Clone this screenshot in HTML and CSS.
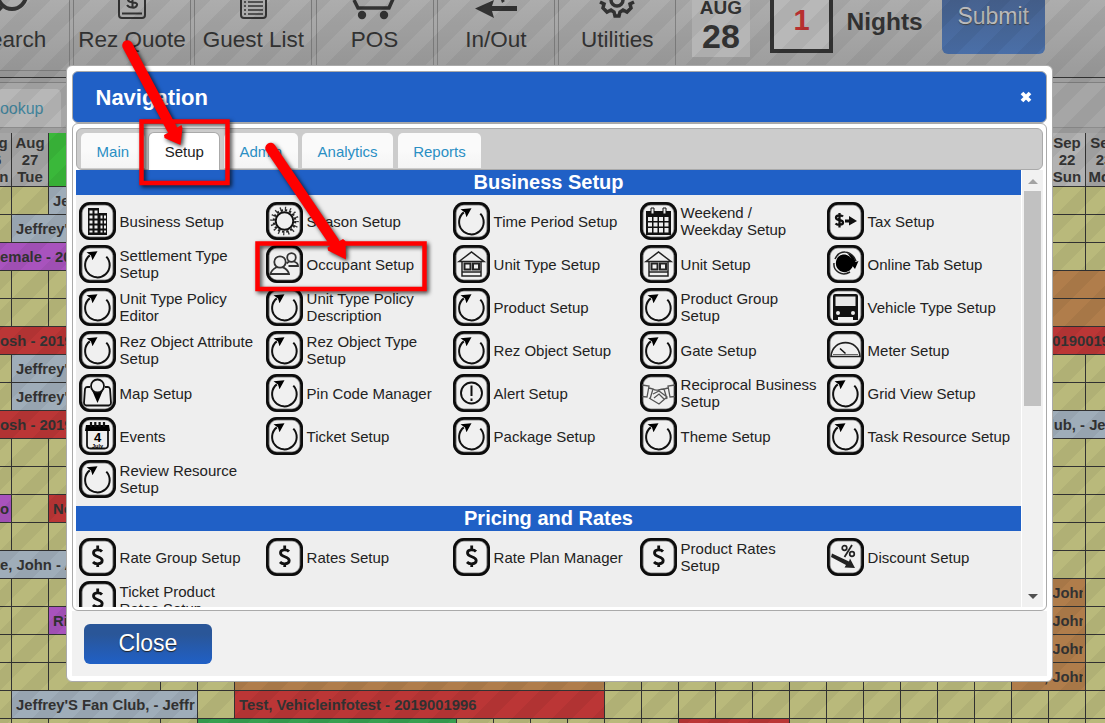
FILE: index.html
```
<!DOCTYPE html>
<html lang="en">
<head>
<meta charset="utf-8">
<title>Navigation</title>
<link rel="stylesheet" href="styles.css">
</head>
<body>

<!-- icons used by the navigation items -->
<svg class="defs" width="0" height="0">
  <symbol id="reload" viewBox="0 0 37 38"><path d="M27.3 11.600A12.300 12.300 0 1 1 10.800 10.400" fill="none" stroke="#111" stroke-width="2"/><path d="M7.500 7.200l11-1-5 9-1.500-4.700z" fill="#000"/></symbol>
  <symbol id="building" viewBox="0 0 37 38"><path d="M9 6h11v27H9zM20 11h8v22h-8z" fill="#111"/><path d="M10.500 8.500h3v3h-3zM15.500 8.500h3v3h-3zM10.500 13.500h3v3h-3zM15.500 13.500h3v3h-3zM10.500 18.500h3v3h-3zM15.500 18.500h3v3h-3zM10.500 23.500h3v3h-3zM15.500 23.500h3v3h-3zM10.500 28.500h3v2h-3zM15.500 28.500h3v2h-3zM21.500 13.500h2v3h-2zM25 13.500h2v3h-2zM21.500 18.500h2v3h-2zM25 18.500h2v3h-2zM21.500 23.500h2v3h-2zM25 23.500h2v3h-2zM21.500 28.500h2v2h-2zM25 28.500h2v2h-2z" fill="#eee"/></symbol>
  <symbol id="sun" viewBox="0 0 37 38"><circle cx="18.500" cy="19" r="8.800" fill="none" stroke="#111" stroke-width="2"/><circle cx="18.500" cy="19" r="10.800" fill="none" stroke="#222" stroke-width="2.200" stroke-dasharray="2.400 1.841"/><circle cx="18.500" cy="19" r="13" fill="none" stroke="#333" stroke-width="2.600" stroke-dasharray="1.300 3.805"/></symbol>
  <symbol id="calendar" viewBox="0 0 37 38"><path d="M6 9h25v24H6z" fill="#111"/><path d="M8 15h4v4H8zM13.500 15h4v4h-4zM19 15h4v4h-4zM24.500 15h4v4h-4zM8 20.500h4v4H8zM13.500 20.500h4v4h-4zM19 20.500h4v4h-4zM24.500 20.500h4v4h-4zM8 26h4v4.500H8zM13.500 26h4v4.500h-4zM19 26h4v4.500h-4zM24.500 26h4v4.500h-4z" fill="#eee"/><path d="M11 6h3v6h-3zM23 6h3v6h-3z" fill="#eee" stroke="#111"/></symbol>
  <symbol id="tax" viewBox="0 0 37 38"><path d="M16 14.500c-1.500-1.700-7-1.800-7 1.200 0 3.300 7 1.800 7 4.800 0 2.900-5.800 2.700-7.500 1M12.500 11v14.500" fill="none" stroke="#111" stroke-width="2.300"/><path d="M18 17.500h4v-3.500l8 5-8 4.500v-3h-4z" fill="#111"/></symbol>
  <symbol id="people" viewBox="0 0 37 38"><g fill="none" stroke="#333" stroke-width="1.800"><circle cx="14" cy="17" r="5.700"/><path d="M11 22c-3 1.500-5.500 2.500-6.500 7H23c-.8-4.500-3.500-5.500-6.500-7"/><circle cx="25.500" cy="12.500" r="4.300"/><path d="M20.500 18.500l2.500-2M28 16.500c2.500.8 4 2 4 4.500H22.500"/></g></symbol>
  <symbol id="house" viewBox="0 0 37 38"><g fill="none" stroke="#222" stroke-width="1.500"><path d="M6 16.500L18.500 7 31 16.500zM9 16.500V31h19V16.500M9 27h19"/><path d="M11.500 18.500h6v6h-6zM20 18.500h6v6h-6z" stroke-width="2"/></g></symbol>
  <symbol id="globe" viewBox="0 0 37 38"><path d="M11 12c4-4 10-3 13 1 3 3 3 8 0 11-3 4-9 4-12 1-4-3-4-9-1-13z" fill="#000"/><path d="M8 14C12 5 24 4 29 16M7 18c-1 8 8 14 16 9" fill="none" stroke="#222" stroke-width="1.500"/><path d="M20 8c5 1 8 5 8.500 9l3-1-3.500 8-5-6h2.500c-.5-4-2.500-7-5.500-10z" fill="#000"/></symbol>
  <symbol id="bus" viewBox="0 0 37 38"><path d="M8 6h21q2 0 2 2v24h-5v-3H11v3H6V8q0-2 2-2z" fill="#111"/><path d="M8.500 8.500h20v9.500h-20z" fill="#e8e8e8"/><circle cx="11" cy="25" r="2" fill="#eee"/><circle cx="26" cy="25" r="2" fill="#eee"/></symbol>
  <symbol id="meter" viewBox="0 0 37 38"><path d="M4 25.500C5 7 32 7 33 25.500z" fill="none" stroke="#222" stroke-width="1.600"/><path d="M6 23.500h25" stroke="#666"/><path d="M13 17.500l5.500 5" stroke="#111" stroke-width="1.500"/></symbol>
  <symbol id="map" viewBox="0 0 37 38"><path d="M11 13H8q-1.500 0-2 2L5 29q0 2 2 2.500h23q2-.5 2-2.500l-1-14q-.5-2-2-2h-3" fill="none" stroke="#111" stroke-width="1.800"/><path d="M12 14l6.500 15L25 14z" fill="#000"/><circle cx="18.500" cy="12" r="6.500" fill="#eee" stroke="#111" stroke-width="1.800"/></symbol>
  <symbol id="alert" viewBox="0 0 37 38"><circle cx="18.500" cy="19" r="10.500" fill="none" stroke="#111" stroke-width="1.900"/><path d="M18.500 11.500v10.500M18.500 24.500v2.500" stroke="#111" stroke-width="2"/></symbol>
  <symbol id="hands" viewBox="0 0 37 38"><g fill="none" stroke="#555" stroke-width="1.300"><path d="M2 11l7 1-2 11-5-.5M35 11l-7 1 2 11 5-.5M9 14l4 1-3 10M28 14l-4 1 3 10M13 15c4 3 5 0 11 0M13 20l6-3 8 6-8 7-10-6M14 24l5-4 5 5"/></g></symbol>
  <symbol id="events" viewBox="0 0 37 38"><path d="M8 13v15q0 3.500 3.500 3.500h14q3.500 0 3.500-3.500V13" fill="#eee" stroke="#111" stroke-width="1.800"/><path d="M7 8h23l1 6H6z" fill="#000"/><path d="M12 5v5M16.300 5v5M20.600 5v5M25 5v5" stroke="#111" stroke-width="2.200"/><text x="18.500" y="25" font-size="13" font-weight="bold" text-anchor="middle">4</text><text x="18.500" y="30.500" font-size="5.500" font-weight="bold" text-anchor="middle">July</text></symbol>
  <symbol id="dollar" viewBox="0 0 37 38"><path d="M23 13.500c-1.800-2-8.500-2.600-8.500 1.500 0 4.500 8.700 3 8.700 7.500 0 4.200-7 4-9.200 1.500M18.700 7.500v4M18.700 25v4" fill="none" stroke="#111" stroke-width="2.800"/></symbol>
  <symbol id="discount" viewBox="0 0 37 38"><path d="M5 15.500l17 8 1-3 5 9.500-10.500-.500 1.500-2.500L4 19z" fill="#222"/><g fill="none" stroke="#222" stroke-width="1.700"><circle cx="17.500" cy="10" r="2.300"/><circle cx="25" cy="16" r="2.300"/><path d="M25 7l-7.500 12"/></g></symbol>
</svg>

<div class="toolbar">
  <div class="tool first"><svg width="60" height="22" viewBox="0 0 60 22"><g fill="none" stroke="#333"><circle cx="31" cy="-5" r="14" stroke-width="4"/><path d="M20 6l-9 9" stroke-width="6"/></g></svg><span>Search</span></div>
  <div class="tool"><svg width="60" height="22" viewBox="0 0 60 22"><g fill="none" stroke="#333" stroke-width="2"><rect x="17" y="-14" width="26" height="32" rx="3"/><path d="M20 13.500h20"/><path d="M36-1c-4-4-11-3-10 1s10 1 9 5-8 3-10 0M30.500-4v12"/></g></svg><span>Rez Quote</span></div>
  <div class="tool"><svg width="60" height="22" viewBox="0 0 60 22"><g fill="none" stroke="#333" stroke-width="2"><rect x="18" y="-14" width="25" height="32" rx="3"/><path d="M21 2h2M25 2h15M21 6h2M25 6h15M21 10h2M25 10h15M21 14h2M25 14h15" stroke-width="1.300"/></g></svg><span>Guest List</span></div>
  <div class="tool"><svg width="60" height="22" viewBox="0 0 60 22"><path d="M9 0l4 8h31l4-9" fill="none" stroke="#333" stroke-width="3.500"/><circle cx="17" cy="15" r="4.200" fill="#333"/><circle cx="39" cy="15" r="4.200" fill="#333"/></svg><span>POS</span></div>
  <div class="tool"><svg width="60" height="22" viewBox="0 0 60 22"><path d="M9 8.500L28 0l-2 6h25v5H26l2 7z" fill="#333"/><path d="M34-3l5 4-3 2z" fill="#333"/></svg><span>In/Out</span></div>
  <div class="tool"><svg width="60" height="22" viewBox="0 0 60 22"><g fill="none" stroke="#333" stroke-width="3.500"><circle cx="30" cy="0" r="6"/><path d="M13 2l4 2-1 4 4 4 4-2 3 2 1 4h4l1-4 3-2 4 2 4-4-1-4 4-2"/></g></svg><span>Utilities</span></div>
  <div class="date"><span class="month">AUG</span><span class="day">28</span></div>
  <div class="count">1</div>
  <div class="nights">Nights</div>
  <div class="submit">Submit</div>
</div>

<div class="lookupbar"><div class="lookup">Lookup</div></div>

<div class="gridhead">
  <div class="past">Aug<br>26<br>Mon</div><div>Aug<br>27<br>Tue</div><div class="today"></div><div class="skip"></div>
  <div class="weekend">Sep<br>22<br>Sun</div><div>Sep<br>23<br>Mon</div>
</div>

<div class="calendar">
  <div class="row"><div class="ev blue" style="grid-column:3/6">Jeffrey'S</div></div>
  <div class="row"><div class="ev blue" style="grid-column:2/6">Jeffrey'S Fan</div></div>
  <div class="row"><div class="ev purple cut" style="grid-column:1/5">emale - 2019001996</div></div>
  <div class="row"><div class="ev orange" style="grid-column:27/31"></div></div>
  <div class="row"><div class="ev orange" style="grid-column:27/31"></div></div>
  <div class="row"><div class="ev red cut" style="grid-column:1/5">osh - 2019001996</div><div class="ev red tail" style="grid-column:20/31">2019001996</div></div>
  <div class="row"><div class="ev blue" style="grid-column:2/6">Jeffrey'S Fan</div></div>
  <div class="row"><div class="ev blue" style="grid-column:2/6">Jeffrey'S Fan</div></div>
  <div class="row"><div class="ev red cut" style="grid-column:1/5">osh - 2019001996</div><div class="ev blue club" style="grid-column:20/31">Club, - Jeffrey</div></div>
  <div class="row"></div>
  <div class="row"></div>
  <div class="row"><div class="ev purple cut" style="grid-column:1/2">o</div><div class="ev red" style="grid-column:3/6">No Name</div></div>
  <div class="row"></div>
  <div class="row"><div class="ev blue cut" style="grid-column:1/6">e, John - A</div></div>
  <div class="row"><div class="ev orange" style="grid-column:27/29">Doe, John</div></div>
  <div class="row"><div class="ev purple" style="grid-column:3/5">Rick</div><div class="ev orange" style="grid-column:27/29">Doe, John</div></div>
  <div class="row"><div class="ev orange" style="grid-column:27/29">Doe, John</div></div>
  <div class="row"><div class="ev orange" style="grid-column:6/16"></div><div class="ev orange" style="grid-column:27/29">Doe, John</div></div>
  <div class="row"><div class="ev blue" style="grid-column:2/5">Jeffrey'S Fan Club, - Jeffrey</div><div class="ev red" style="grid-column:6/16">Test, Vehicleinfotest - 2019001996</div></div>
  <div class="row"><div class="ev green" style="grid-column:5/12"></div><div class="ev red" style="grid-column:18/21"></div></div>
</div>

<div class="overlay"></div>

<div class="dialog">
  <div class="titlebar"><span>Navigation</span><svg width="12" height="12" viewBox="0 0 12 12"><path d="M2 2l8 8M10 2l-8 8" stroke="#fff" stroke-width="3.800"/></svg></div>
  <div class="content">
    <div class="tabs"><a>Main</a><a class="active">Setup</a><a>Admin</a><a>Analytics</a><a>Reports</a></div>
    <div class="panel">
      <div class="scroll">
        <h2>Business Setup</h2>
        <div class="items">
          <div class="item"><svg><use href="#building"/></svg><span>Business Setup</span></div>
          <div class="item"><svg><use href="#sun"/></svg><span>Season Setup</span></div>
          <div class="item"><svg><use href="#reload"/></svg><span>Time Period Setup</span></div>
          <div class="item"><svg><use href="#calendar"/></svg><span>Weekend /<br>Weekday Setup</span></div>
          <div class="item"><svg><use href="#tax"/></svg><span>Tax Setup</span></div>
          <div class="item"><svg><use href="#reload"/></svg><span>Settlement Type<br>Setup</span></div>
          <div class="item"><svg><use href="#people"/></svg><span>Occupant Setup</span></div>
          <div class="item"><svg><use href="#house"/></svg><span>Unit Type Setup</span></div>
          <div class="item"><svg><use href="#house"/></svg><span>Unit Setup</span></div>
          <div class="item"><svg><use href="#globe"/></svg><span>Online Tab Setup</span></div>
          <div class="item"><svg><use href="#reload"/></svg><span>Unit Type Policy<br>Editor</span></div>
          <div class="item"><svg><use href="#reload"/></svg><span>Unit Type Policy<br>Description</span></div>
          <div class="item"><svg><use href="#reload"/></svg><span>Product Setup</span></div>
          <div class="item"><svg><use href="#reload"/></svg><span>Product Group<br>Setup</span></div>
          <div class="item"><svg><use href="#bus"/></svg><span>Vehicle Type Setup</span></div>
          <div class="item"><svg><use href="#reload"/></svg><span>Rez Object Attribute<br>Setup</span></div>
          <div class="item"><svg><use href="#reload"/></svg><span>Rez Object Type<br>Setup</span></div>
          <div class="item"><svg><use href="#reload"/></svg><span>Rez Object Setup</span></div>
          <div class="item"><svg><use href="#reload"/></svg><span>Gate Setup</span></div>
          <div class="item"><svg><use href="#meter"/></svg><span>Meter Setup</span></div>
          <div class="item"><svg><use href="#map"/></svg><span>Map Setup</span></div>
          <div class="item"><svg><use href="#reload"/></svg><span>Pin Code Manager</span></div>
          <div class="item"><svg><use href="#alert"/></svg><span>Alert Setup</span></div>
          <div class="item"><svg><use href="#hands"/></svg><span>Reciprocal Business<br>Setup</span></div>
          <div class="item"><svg><use href="#reload"/></svg><span>Grid View Setup</span></div>
          <div class="item"><svg><use href="#events"/></svg><span>Events</span></div>
          <div class="item"><svg><use href="#reload"/></svg><span>Ticket Setup</span></div>
          <div class="item"><svg><use href="#reload"/></svg><span>Package Setup</span></div>
          <div class="item"><svg><use href="#reload"/></svg><span>Theme Setup</span></div>
          <div class="item"><svg><use href="#reload"/></svg><span>Task Resource Setup</span></div>
          <div class="item"><svg><use href="#reload"/></svg><span>Review Resource<br>Setup</span></div>
        </div>
        <h2>Pricing and Rates</h2>
        <div class="items">
          <div class="item"><svg><use href="#dollar"/></svg><span>Rate Group Setup</span></div>
          <div class="item"><svg><use href="#dollar"/></svg><span>Rates Setup</span></div>
          <div class="item"><svg><use href="#dollar"/></svg><span>Rate Plan Manager</span></div>
          <div class="item"><svg><use href="#dollar"/></svg><span>Product Rates<br>Setup</span></div>
          <div class="item"><svg><use href="#discount"/></svg><span>Discount Setup</span></div>
          <div class="item"><svg><use href="#dollar"/></svg><span>Ticket Product<br>Rates Setup</span></div>
        </div>
      </div>
      <div class="scrollbar"><i class="up"></i><i class="thumb"></i><i class="down"></i></div>
    </div>
  </div>
  <div class="buttons"><div class="close">Close</div></div>
</div>

<!-- red boxes and arrows -->
<svg class="marks" width="1105" height="723" viewBox="0 0 1105 723">
  <g fill="none" stroke="#f00" stroke-width="4.500">
    <rect x="141.500" y="121.500" width="86" height="61.500"/>
    <rect x="257.500" y="243.500" width="167" height="45.500"/>
  </g>
  <g stroke="#f00" stroke-width="10.500" stroke-linecap="round"><path d="M127.500 45.500L172 129M270.500 148L334 242"/></g>
  <path d="M180.500 145L164.500 138 164 135 181.500 125 182.500 128zM346 259.500L328 250.500 327.500 247.500 343 239 345.500 241z" fill="#f00"/>
</svg>

</body>
</html>
```
FILE: styles.css
```
*
{
box-sizing:border-box;
}

body
{
margin:0;
width:1105px;
height:723px;
overflow:hidden;
position:relative;
background:#a6a6a6;
font-family:"Liberation Sans", Arial, sans-serif;
font-size:15px;
line-height:17px;
color:#222;
}

.defs
{
position:absolute;
}

/* top toolbar */
.toolbar
{
display:flex;
height:78px;
border-bottom:1px solid #333;
background:linear-gradient(#adadad,#9b9b9b);
color:#333;
}

.tool
{
width:118px;
height:71px;
margin-right:3.3px;
flex:none;
display:flex;
flex-direction:column;
align-items:center;
border:solid #808080;
border-width:0 1px 1px 1px;
font-size:22.5px;
line-height:26px;
white-space:nowrap;
}

.tool svg
{
display:block;
margin-bottom:5px;
}

.tool.first
{
margin-left:-48.3px;
}

.date
{
width:58px;
height:57px;
margin-left:12.5px;
overflow:hidden;
background:#b6b6b6;
font-weight:bold;
text-align:center;
display:flex;
flex-direction:column;
flex:none;
}

.month
{
font-size:19px;
line-height:15px;
}

.day
{
font-size:34px;
line-height:43px;
}

.count
{
width:63px;
height:53px;
margin-left:20px;
flex:none;
border:4px solid #333;
border-top:0;
background:#b8b8b8;
color:#b83030;
font-size:29px;
font-weight:bold;
line-height:41px;
text-align:center;
}

.nights
{
margin-left:13.5px;
font-size:24.5px;
font-weight:bold;
line-height:43px;
}

.submit
{
width:103px;
height:54px;
margin-left:19px;
flex:none;
border-radius:0 0 6px 6px;
background:linear-gradient(#47628f,#4a6fa8);
color:#bbb;
font-size:23px;
line-height:32px;
text-align:center;
text-shadow:0 1px 1px #444;
}

.lookupbar
{
height:55px;
padding-top:11px;
background:linear-gradient(#9f9f9f 4px,#808080 4px,#808080 5px,#a6a6a6 5px,#a6a6a6 49px,#8c8c8c 49px,#8c8c8c 50px,#9f9f9f 50px);
}

.lookup
{
width:61px;
height:38px;
border-radius:0 5px 0 0;
background:#b7b7b7;
color:#42849c;
font-size:16px;
line-height:39px;
padding-right:17.5px;
display:flex;
justify-content:flex-end;
}

/* calendar behind the dialog */
.gridhead
{
display:grid;
grid-template-columns:12px 37px 112px 888px 37px 37px;
height:54px;
border-bottom:1px solid #333;
font-weight:bold;
color:#333;
text-align:center;
}

.gridhead div
{
border-right:1px solid #333;
padding-top:2px;
overflow:hidden;
line-height:16.8px;
}

.gridhead .past
{
width:37px;
margin-left:-25px;
}

.gridhead .today
{
background:#3ab83a;
}

.gridhead .weekend
{
background:#b2b2b2;
}

.row
{
display:grid;
grid-template-columns:12px 37px 112px repeat(26,37px);
grid-template-rows:27px;
height:28px;
border-bottom:1px solid #333;
background-color:#b9b97b;
background-image:linear-gradient(90deg,transparent 11px,#333 11px,#333 12px,transparent 12px,transparent 48px,#333 48px,#333 49px,transparent 49px),repeating-linear-gradient(90deg,transparent 0,transparent 36px,#333 36px,#333 37px);
background-position:0 0,124px 0;
background-repeat:no-repeat;
}

.ev
{
min-width:0;
border-right:1px solid #333;
padding:1px 2px 0 4px;
overflow:clip;
overflow-clip-margin:content-box;
white-space:nowrap;
font-size:14.8px;
font-weight:bold;
line-height:26px;
color:#333;
}

.cut
{
padding-left:0;
}

.blue
{
background:#9fadb9;
}

.red
{
background:#bb3636;
}

.purple
{
background:#a853bd;
}

.orange
{
background:#b07d4b;
}

.green
{
background:#36a050;
}

.tail
{
padding-left:291px;
}

.club
{
padding-left:286px;
}

.overlay
{
position:absolute;
left:0;
top:0;
width:1105px;
height:723px;
background:linear-gradient(135deg,rgba(0,0,0,.05) 13%,transparent 13%,transparent 38%,rgba(0,0,0,.05) 38%,rgba(0,0,0,.05) 63%,transparent 63%,transparent 88%,rgba(0,0,0,.05) 88%);
background-size:40px 40px;
}

/* navigation dialog */
.dialog
{
position:absolute;
left:66px;
top:65px;
width:987px;
height:617px;
padding:5px;
border:1px solid #aaa;
border-radius:6px;
background:#fff;
}

.titlebar
{
display:flex;
align-items:center;
justify-content:space-between;
height:52px;
padding:0 14.5px 0 22.5px;
border:1px solid #aaa;
border-radius:6px;
background:#2060c6;
color:#fff;
font-size:22px;
font-weight:bold;
}

.content
{
height:488px;
padding:4px 3px 3px;
border:1px solid #aaa;
border-radius:6px;
background:#fff;
}

.tabs
{
display:flex;
align-items:flex-end;
gap:4.4px;
height:42px;
padding-left:4px;
border:1px solid #aaa;
border-radius:6px;
background:#ccc;
}

.tabs a
{
height:35px;
margin-bottom:1px;
padding:0 15.6px;
border-radius:5px 5px 0 0;
background:linear-gradient(#fafafa 50%,#f4f4f4);
color:#2a8fc4;
line-height:37px;
}

.tabs .active
{
height:37px;
margin-bottom:-1px;
background:#fff;
box-shadow:0 0 0 1px #aaa;
clip-path:inset(-1px -1px 0 -1px);
color:#222;
line-height:37px;
}

.panel
{
display:flex;
height:437px;
overflow:hidden;
}

.scroll
{
width:945px;
margin-right:1px;
flex:none;
overflow:hidden;
background:#eee;
}

.scroll h2
{
margin:0;
height:25px;
background:#2060c6;
color:#fff;
font-size:20px;
line-height:25px;
text-align:center;
}

.items
{
display:grid;
grid-template-columns:repeat(5,187px);
grid-auto-rows:43px;
padding:7px 0 3px 3px;
}

.item
{
display:flex;
align-items:center;
gap:3.6px;
height:38px;
white-space:nowrap;
}

.item svg
{
width:37px;
height:38px;
flex:none;
border-radius:11px;
background:#f0f0f0;
box-shadow:inset 0 0 0 2.7px #0c0c0c, inset 0 0 0 3.6px #888;
}

.scrollbar
{
display:flex;
flex-direction:column;
align-items:center;
width:21px;
background:#f1f1f1;
}

.up
{
margin-top:9px;
border:5px solid transparent;
border-top:0;
border-bottom-color:#a3a3a3;
}

.thumb
{
width:17px;
height:215px;
margin-top:7px;
background:#c1c1c1;
}

.down
{
margin-top:auto;
margin-bottom:8px;
border:5px solid transparent;
border-bottom:0;
border-top-color:#505050;
}

.buttons
{
height:65px;
padding:13px 12px;
background:#f1f1f1;
}

.close
{
width:128px;
height:40px;
border-radius:6px;
background:linear-gradient(#2a5698 25%,#2060c6);
color:#fff;
font-size:23px;
line-height:38px;
text-align:center;
text-shadow:0 1px 1px #222;
}

.marks
{
position:absolute;
left:0;
top:0;
filter:drop-shadow(2px 2px 2px rgba(0,0,0,.75));
}
```
